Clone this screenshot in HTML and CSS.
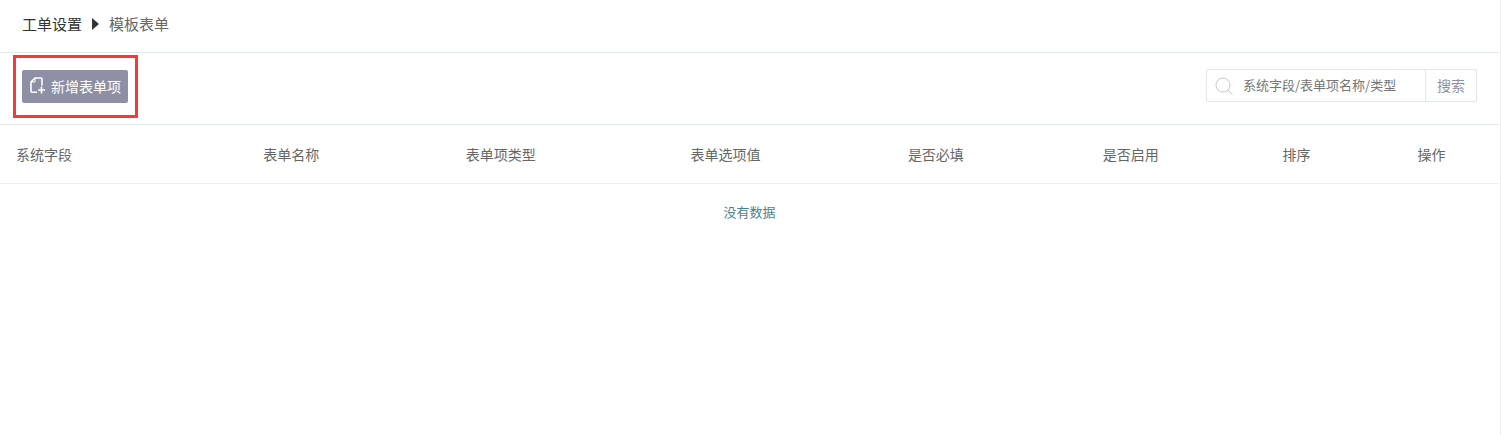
FILE: index.html
```
<!DOCTYPE html>
<html lang="zh-CN">
<head>
  <meta charset="UTF-8" />
  <meta name="viewport" content="width=device-width, initial-scale=1.0" />
  <title>模板表单</title>
  <link rel="stylesheet" href="styles.css">
</head>
<body>

<main class="page">
  <!-- Breadcrumb -->
  <nav class="breadcrumb">
    <a href="#">工单设置</a>
    <svg class="arrow" width="7" height="12" viewBox="0 0 7 12"><path d="M0 0 L7 6 L0 12 Z" fill="#333"/></svg>
    <span>模板表单</span>
  </nav>

  <!-- Toolbar -->
  <div class="toolbar">
    <div class="highlight">
      <button type="button" class="btn-add">
        <svg width="15" height="17" viewBox="0 0 15 17" fill="none" stroke="#fff" stroke-width="1.6">
          <path d="M7 15.2 H2 Q1 15.2 1 14.2 V5 L5 1 H11 Q12 1 12 2 V8.5"/>
          <path d="M1 5 H5 V1" stroke-width="1"/>
          <path d="M8 13 H15 M11.5 9.5 V16.5"/>
        </svg>
        新增表单项
      </button>
    </div>

    <form class="search">
      <svg class="search-icon" width="18" height="18" viewBox="0 0 18 18" fill="none" stroke="#c4c6cc">
        <circle cx="8" cy="8" r="7"/>
        <path d="M13 13 L17.5 17.5"/>
      </svg>
      <input type="text" aria-label="搜索" placeholder="系统字段/表单项名称/类型">
      <button type="button">搜索</button>
    </form>
  </div>

  <!-- Form items -->
  <table class="list">
    <thead>
      <tr>
        <th class="col-field">系统字段</th>
        <th class="col-name">表单名称</th>
        <th class="col-type">表单项类型</th>
        <th class="col-value">表单选项值</th>
        <th class="col-required">是否必填</th>
        <th class="col-enabled">是否启用</th>
        <th class="col-sort">排序</th>
        <th>操作</th>
      </tr>
    </thead>
    <tbody>
      <tr>
        <td class="empty" colspan="8">没有数据</td>
      </tr>
    </tbody>
  </table>
</main>

</body>
</html>
```
FILE: styles.css
```
* {
  box-sizing: border-box;
}

body {
  margin: 0;
  background: #fff;
  color: #666;
  font-family: "Noto Sans CJK SC", sans-serif;
  font-size: 14px;
  line-height: 20px;
}

input, button {
  font-family: inherit;
  margin: 0;
}

.page {
  min-height: 100vh;
  padding-right: 1px;
  border-right: 1px solid #eee;
}

.breadcrumb {
  display: flex;
  align-items: center;
  padding: 12px 22px 16px;
  border-bottom: 1px solid #e2e7eb;
  font-size: 15px;
  line-height: 24px;
}

.breadcrumb a {
  color: #333;
  text-decoration: none;
}

.breadcrumb .arrow {
  margin: 0 10px;
}

.toolbar {
  display: flex;
  align-items: flex-start;
  justify-content: space-between;
  padding: 2px 22px 6px 13px;
  border-bottom: 1px solid #e2e7eb;
}

.highlight {
  padding: 12px 7px 12px 6px;
  border: 3px solid #f93838;
}

.btn-add {
  display: flex;
  align-items: center;
  gap: 6px;
  height: 33px;
  padding: 0 7px 2px 8px;
  border: none;
  border-radius: 2px;
  background: #8d90a4;
  color: #fff;
  font-size: 14px;
  line-height: 20px;
  white-space: nowrap;
  cursor: pointer;
}

.search {
  display: flex;
  align-items: center;
  width: 271px;
  height: 33px;
  margin-top: 14px;
  border: 1px solid #e2e7eb;
  border-radius: 2px;
}

.search-icon {
  flex: none;
  margin-left: 8px;
}

.search input {
  flex: 1;
  min-width: 0;
  height: 100%;
  padding: 0 10px 2px;
  border: none;
  outline: none;
  background: none;
  color: #666;
  font-size: 13px;
}

.search input::placeholder {
  color: #757575;
}

.search button {
  width: 51px;
  height: 100%;
  padding: 0 0 2px;
  border: none;
  border-left: 1px solid #e2e7eb;
  background: none;
  color: #8d90a4;
  font-size: 14px;
  cursor: pointer;
}

.list {
  width: 100%;
  table-layout: fixed;
  border-collapse: separate;
  border-spacing: 0;
}

.list th {
  height: 59px;
  padding: 0 0 1px 16px;
  border-bottom: 1px solid #eee;
  font-weight: normal;
  text-align: left;
}

.col-field { width: 16.5%; }
.col-name { width: 13.5%; }
.col-type { width: 15%; }
.col-value { width: 14.5%; }
.col-required { width: 13%; }
.col-enabled { width: 12%; }
.col-sort { width: 9%; }

.list .empty {
  padding: 18px 0;
  color: #4f7f8f;
  font-size: 13px;
  text-align: center;
}
```
